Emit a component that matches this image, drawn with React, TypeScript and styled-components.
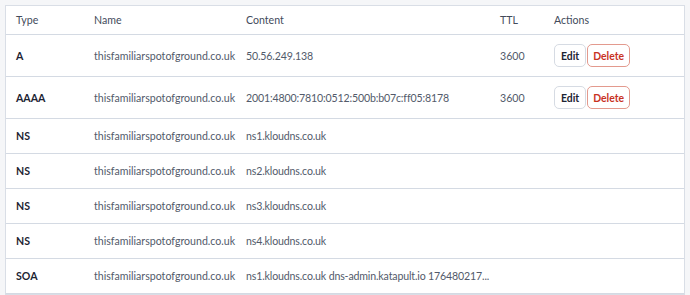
import styled, { createGlobalStyle } from 'styled-components';

const GlobalStyle = createGlobalStyle`
  body {
    margin: 0;
    background: #f5f6f8;
    font-family: Lato, 'Noto Sans', sans-serif;
  }
`;

const StyledPage = styled.div`
  padding: 5px 5px 0;
`;
const StyledCard = styled.div`
  background: #ffffff;
  border: 1px solid #d9dee6;
`;
const StyledTable = styled.table`
  width: 100%;
  border-collapse: collapse;
  table-layout: fixed;
  font-size: 10.6px;
`;
const StyledHeadCell = styled.th`
  text-align: left;
  font-weight: 400;
  color: #434b5b;
  height: 28px;
  padding: 0 10px;
  border-bottom: 1px solid #d4dae3;
`;
const StyledRow = styled.tr`
  border-bottom: 1px solid #d4dae3;
`;
const StyledCell = styled.td<{ $strong?: boolean; $tall?: boolean }>`
  height: ${(p) => (p.$tall ? '41px' : '34px')};
  padding: 0 10px;
  color: ${(p) => (p.$strong ? '#1d2433' : '#525a6a')};
  font-weight: ${(p) => (p.$strong ? 700 : 400)};
  white-space: nowrap;
`;
const StyledContent = styled.span`
  letter-spacing: -0.15px;
`;
const StyledActions = styled.div`
  display: flex;
  gap: 1px;
`;
const StyledButton = styled.button<{ $danger?: boolean }>`
  font-family: inherit;
  font-size: 10.4px;
  font-weight: 700;
  height: 23px;
  padding: 0 ${(p) => (p.$danger ? '5px' : '6px')};
  border-radius: 5px;
  background: #ffffff;
  color: ${(p) => (p.$danger ? '#c8321f' : '#1d2433')};
  border: 1px solid ${(p) => (p.$danger ? '#e39a8e' : '#d6dbe3')};
  cursor: pointer;
`;

type DnsRecord = {
  type: string;
  name: string;
  content: string;
  ttl?: string;
};

const records: DnsRecord[] = [
  { type: 'A', name: 'thisfamiliarspotofground.co.uk', content: '50.56.249.138', ttl: '3600' },
  {
    type: 'AAAA',
    name: 'thisfamiliarspotofground.co.uk',
    content: '2001:4800:7810:0512:500b:b07c:ff05:8178',
    ttl: '3600',
  },
  { type: 'NS', name: 'thisfamiliarspotofground.co.uk', content: 'ns1.kloudns.co.uk' },
  { type: 'NS', name: 'thisfamiliarspotofground.co.uk', content: 'ns2.kloudns.co.uk' },
  { type: 'NS', name: 'thisfamiliarspotofground.co.uk', content: 'ns3.kloudns.co.uk' },
  { type: 'NS', name: 'thisfamiliarspotofground.co.uk', content: 'ns4.kloudns.co.uk' },
  {
    type: 'SOA',
    name: 'thisfamiliarspotofground.co.uk',
    content: 'ns1.kloudns.co.uk dns-admin.katapult.io 176480217...',
  },
];

const App = () => {
  return (
    <>
      <GlobalStyle />
      <StyledPage>
        <StyledCard>
          <StyledTable>
            <colgroup>
              <col style={{ width: 78 }} />
              <col style={{ width: 152 }} />
              <col style={{ width: 254 }} />
              <col style={{ width: 54 }} />
              <col />
            </colgroup>
            <thead>
              <tr>
                <StyledHeadCell>Type</StyledHeadCell>
                <StyledHeadCell>Name</StyledHeadCell>
                <StyledHeadCell>Content</StyledHeadCell>
                <StyledHeadCell>TTL</StyledHeadCell>
                <StyledHeadCell>Actions</StyledHeadCell>
              </tr>
            </thead>
            <tbody>
              {records.map((r, i) => {
                const tall = !!r.ttl;
                return (
                  <StyledRow key={i}>
                    <StyledCell $tall={tall} $strong>
                      {r.type}
                    </StyledCell>
                    <StyledCell $tall={tall}>{r.name}</StyledCell>
                    <StyledCell $tall={tall}>
                      <StyledContent>{r.content}</StyledContent>
                    </StyledCell>
                    <StyledCell $tall={tall}>{r.ttl}</StyledCell>
                    <StyledCell $tall={tall}>
                      {tall && (
                        <StyledActions>
                          <StyledButton>Edit</StyledButton>
                          <StyledButton $danger>Delete</StyledButton>
                        </StyledActions>
                      )}
                    </StyledCell>
                  </StyledRow>
                );
              })}
            </tbody>
          </StyledTable>
        </StyledCard>
      </StyledPage>
    </>
  );
};

export default App;
